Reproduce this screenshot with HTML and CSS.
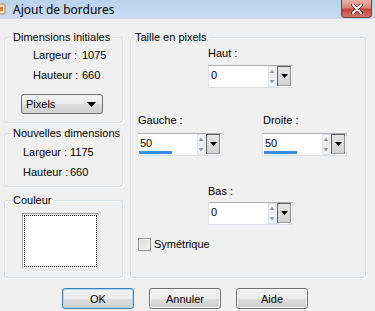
FILE: index.html
```html
<!DOCTYPE html>
<html lang="fr">
<head>
    <meta charset="UTF-8">
    <title>Ajout de bordures</title>
    <link rel="stylesheet" href="styles.css">
</head>
<body>
    <div class="window">
        <!-- Barre de titre -->
        <div class="titlebar">
            <svg class="app-icon" width="6" height="12" viewBox="0 0 6 12">
                <rect x="-4" y="1" width="9" height="10" rx="1" fill="#f6e6c8" stroke="#b58a52"/>
                <rect x="0" y="4" width="3" height="4" fill="#d9763a"/>
            </svg>
            <span class="title">Ajout de bordures</span>
            <div class="close">
                <svg width="16" height="10" viewBox="0 0 16 10">
                    <path d="M4 1 L12 9 M12 1 L4 9" stroke="#5a2a24" stroke-width="3.6" stroke-linecap="round"/>
                    <path d="M4 1 L12 9 M12 1 L4 9" stroke="#fff" stroke-width="2" stroke-linecap="round"/>
                </svg>
            </div>
        </div>

        <div class="content">
            <div class="col-left">
                <fieldset class="group g-init">
                    <legend>Dimensions initiales</legend>
                    <div class="dims">
                        <span>Largeur :</span><span>1075</span>
                        <span>Hauteur :</span><span>660</span>
                    </div>
                    <div class="select">
                        <span>Pixels</span>
                        <svg width="9" height="5" viewBox="0 0 9 5"><path d="M0 0 H9 L4.5 5 Z" fill="#000"/></svg>
                    </div>
                </fieldset>

                <fieldset class="group g-new">
                    <legend>Nouvelles dimensions</legend>
                    <div class="dims">
                        <span>Largeur :</span><span>1175</span>
                        <span>Hauteur :</span><span>660</span>
                    </div>
                </fieldset>

                <fieldset class="group g-color">
                    <legend>Couleur</legend>
                    <div class="swatch"><div class="swatch-inner"></div></div>
                </fieldset>
            </div>

            <fieldset class="group g-size">
                <legend>Taille en pixels</legend>

                <div class="center-block first">
                    <div class="lbl">Haut :</div>
                    <div class="spin-field">
                        <span class="val">0</span>
                        <svg class="spin" width="8" height="21" viewBox="0 0 8 21">
                            <rect x="0.5" y="0.5" width="7" height="9.5" fill="#f4f6f9" stroke="#dfe3ea"/>
                            <rect x="0.5" y="11" width="7" height="9.5" fill="#f4f6f9" stroke="#dfe3ea"/>
                            <path d="M1.5 7 L4 3.5 L6.5 7 Z" fill="#8a9cb4"/>
                            <path d="M1.5 14 L4 17.5 L6.5 14 Z" fill="#8a9cb4"/>
                        </svg>
                        <div class="dd"><svg width="7" height="4" viewBox="0 0 7 4"><path d="M0 0 H7 L3.5 4 Z" fill="#000"/></svg></div>
                    </div>
                </div>

                <div class="pair">
                    <div class="side">
                        <div class="lbl">Gauche :</div>
                        <div class="spin-field">
                            <span class="val">50</span>
                            <svg class="spin" width="8" height="21" viewBox="0 0 8 21">
                                <rect x="0.5" y="0.5" width="7" height="9.5" fill="#f4f6f9" stroke="#dfe3ea"/>
                                <rect x="0.5" y="11" width="7" height="9.5" fill="#f4f6f9" stroke="#dfe3ea"/>
                                <path d="M1.5 7 L4 3.5 L6.5 7 Z" fill="#8a9cb4"/>
                                <path d="M1.5 14 L4 17.5 L6.5 14 Z" fill="#8a9cb4"/>
                            </svg>
                            <div class="dd"><svg width="7" height="4" viewBox="0 0 7 4"><path d="M0 0 H7 L3.5 4 Z" fill="#000"/></svg></div>
                            <div class="bar" style="width: 33px"></div>
                        </div>
                    </div>
                    <div class="side">
                        <div class="lbl">Droite :</div>
                        <div class="spin-field">
                            <span class="val">50</span>
                            <svg class="spin" width="8" height="21" viewBox="0 0 8 21">
                                <rect x="0.5" y="0.5" width="7" height="9.5" fill="#f4f6f9" stroke="#dfe3ea"/>
                                <rect x="0.5" y="11" width="7" height="9.5" fill="#f4f6f9" stroke="#dfe3ea"/>
                                <path d="M1.5 7 L4 3.5 L6.5 7 Z" fill="#8a9cb4"/>
                                <path d="M1.5 14 L4 17.5 L6.5 14 Z" fill="#8a9cb4"/>
                            </svg>
                            <div class="dd"><svg width="7" height="4" viewBox="0 0 7 4"><path d="M0 0 H7 L3.5 4 Z" fill="#000"/></svg></div>
                            <div class="bar" style="width: 33px"></div>
                        </div>
                    </div>
                </div>

                <div class="center-block bottom">
                    <div class="lbl">Bas :</div>
                    <div class="spin-field">
                        <span class="val">0</span>
                        <svg class="spin" width="8" height="21" viewBox="0 0 8 21">
                            <rect x="0.5" y="0.5" width="7" height="9.5" fill="#f4f6f9" stroke="#dfe3ea"/>
                            <rect x="0.5" y="11" width="7" height="9.5" fill="#f4f6f9" stroke="#dfe3ea"/>
                            <path d="M1.5 7 L4 3.5 L6.5 7 Z" fill="#8a9cb4"/>
                            <path d="M1.5 14 L4 17.5 L6.5 14 Z" fill="#8a9cb4"/>
                        </svg>
                        <div class="dd"><svg width="7" height="4" viewBox="0 0 7 4"><path d="M0 0 H7 L3.5 4 Z" fill="#000"/></svg></div>
                    </div>
                </div>

                <label class="check">
                    <span class="box"></span>
                    <span>Symétrique</span>
                </label>
            </fieldset>
        </div>

        <div class="buttons">
            <button class="btn default">OK</button>
            <button class="btn">Annuler</button>
            <button class="btn">Aide</button>
        </div>
    </div>
</body>
</html>
```

FILE: styles.css
```css
body {
    margin: 0;
    padding: 0;
    font-family: "Liberation Sans", Arial, sans-serif;
    font-size: 11px;
    color: #000;
    background-color: #f0f0f0;
}
.window {
    width: 375px;
    height: 311px;
    overflow: hidden;
    background-color: #f0f0f0;
}

/* Barre de titre */
.titlebar {
    height: 19px;
    display: flex;
    align-items: flex-start;
    background: linear-gradient(#bcd2ec, #c4d8ef 60%, #cbdcf0);
}
.app-icon {
    margin-top: 3px;
}
.title {
    margin-left: 7px;
    margin-top: 2px;
    font-family: "Noto Sans", "Open Sans", sans-serif;
    font-size: 12px;
    line-height: 15px;
    color: #000;
}
.close {
    margin-left: auto;
    margin-right: 3px;
    width: 29px;
    height: 17px;
    border: 1px solid #7b3a31;
    border-top: none;
    border-radius: 0 0 4px 4px;
    background: linear-gradient(#e8b1a5, #d98776 45%, #c2473a 55%, #d1766a);
    display: flex;
    align-items: center;
    justify-content: center;
}

/* Zone principale */
.content {
    display: flex;
    gap: 7px;
    padding: 12px 0 0 4px;
}
.col-left {
    width: 119px;
    display: flex;
    flex-direction: column;
}
.group {
    box-sizing: border-box;
    margin: 0;
    padding: 0;
    min-width: 0;
    border: 1px solid #d5dfe5;
    border-radius: 3px;
    box-shadow: 1px 1px 0 #fff, inset 1px 1px 0 #fff;
}
.group legend {
    padding: 0 2px;
    margin-left: 6px;
    line-height: 13px;
}
.g-init {
    height: 92px;
}
.g-new {
    height: 60px;
    margin-top: 4px;
}
.g-color {
    height: 84px;
    margin-top: 7px;
}
.g-size {
    width: 236px;
    height: 247px;
}
.g-size legend {
    margin-left: 2px;
}

.dims {
    display: grid;
    line-height: 20px;
}
.g-init .dims {
    grid-template-columns: 49px auto;
    padding: 1px 0 0 28px;
}
.g-new .dims {
    grid-template-columns: 47px auto;
    padding: 2px 0 0 18px;
}

.select {
    box-sizing: border-box;
    width: 82px;
    height: 20px;
    margin: 9px 0 0 16px;
    padding: 0 6px 0 4px;
    border: 1px solid #707070;
    border-radius: 3px;
    background: linear-gradient(#f2f2f2, #ebebeb 50%, #dddddd 50%, #cfcfcf);
    display: flex;
    align-items: center;
    justify-content: space-between;
}

.swatch {
    width: 77px;
    height: 56px;
    margin: 6px 0 0 17px;
    background-color: #fff;
    border: 1px solid #e3e3e3;
    border-top-color: #a0a0a0;
    border-left-color: #a0a0a0;
    padding: 1px;
    box-sizing: border-box;
}
.swatch-inner {
    height: 100%;
    border: 1px dotted #000;
    box-sizing: border-box;
}

/* Champs numériques */
.lbl {
    line-height: 13px;
}
.center-block {
    padding-left: 77px;
}
.center-block.first {
    margin-top: 3px;
}
.center-block.bottom {
    margin-top: 29px;
}
.center-block .spin-field {
    margin-top: 5px;
}
.center-block.bottom .spin-field {
    margin-top: 4px;
}
.pair {
    display: flex;
    gap: 40px;
    padding-left: 6px;
    margin-top: 26px;
}
.pair .lbl {
    padding-left: 1px;
}
.pair .spin-field {
    margin-top: 6px;
}
.spin-field {
    position: relative;
    box-sizing: border-box;
    width: 85px;
    height: 23px;
    display: flex;
    align-items: flex-start;
    background-color: #fff;
    border: 1px solid #dbdfe6;
    border-top-color: #abadb3;
    border-left-color: #e2e3ea;
    border-right-color: #e2e3ea;
}
.val {
    flex: 1;
    padding: 3px 0 0 2px;
    line-height: 13px;
}
.spin {
    margin-top: 0;
}
.dd {
    box-sizing: border-box;
    width: 14px;
    height: 20px;
    margin: 0 1px 0 1px;
    border: 1px solid #5c5c5c;
    border-right-color: #8a8a8a;
    border-bottom-color: #9a9a9a;
    background: linear-gradient(#e6e6e6, #d2d2d2);
    display: flex;
    align-items: center;
    justify-content: center;
}
.bar {
    position: absolute;
    left: 1px;
    bottom: 1px;
    height: 3px;
    background-color: #3a8ee6;
}

/* Case à cocher */
.check {
    display: flex;
    align-items: center;
    gap: 3px;
    margin: 13px 0 0 7px;
    line-height: 13px;
}
.check .box {
    box-sizing: border-box;
    width: 13px;
    height: 13px;
    border: 1px solid #8e8f8f;
    background: linear-gradient(135deg, #d8d8d8, #f6f6f6);
    box-shadow: inset 0 0 0 1px #f4f4f4;
}

/* Boutons */
.buttons {
    display: flex;
    gap: 15px;
    padding-left: 62px;
    margin-top: 10px;
}
.btn {
    box-sizing: border-box;
    width: 72px;
    height: 21px;
    padding: 0;
    font-family: "Liberation Sans", Arial, sans-serif;
    font-size: 11px;
    color: #000;
    border: 1px solid #707070;
    border-radius: 3px;
    background: linear-gradient(#f2f2f2, #ebebeb 50%, #dddddd 50%, #cfcfcf);
    box-shadow: inset 0 0 0 1px #fbfbfb;
}
.btn.default {
    border-color: #3c7fb1;
    box-shadow: inset 0 0 0 1px #a6dcf5;
}
```
